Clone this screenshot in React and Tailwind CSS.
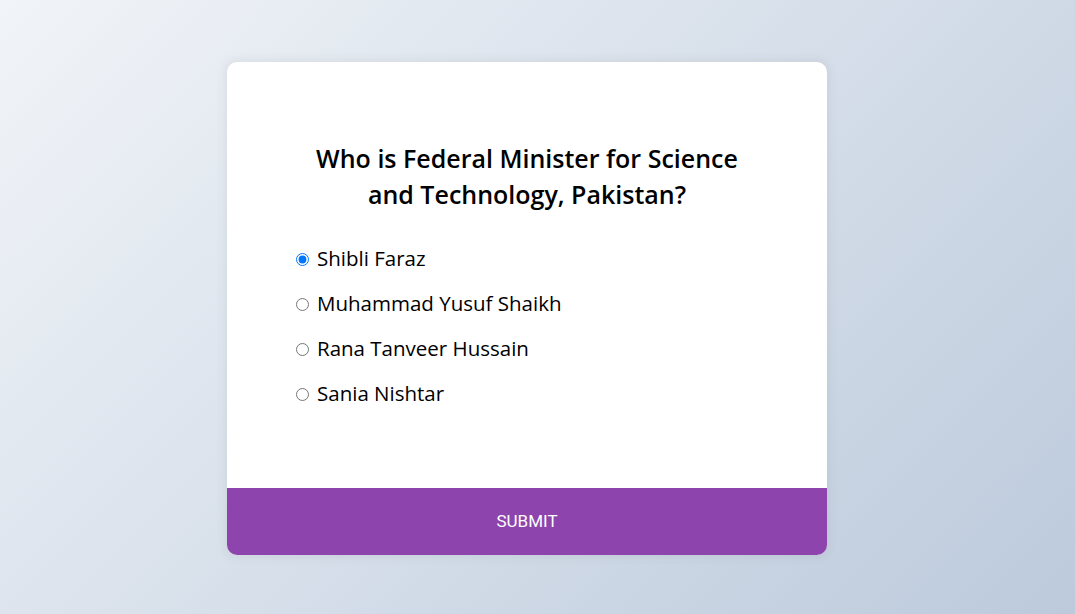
import React, { useState } from "react";

const answers = [
  { id: "a", text: "Shibli Faraz" },
  { id: "b", text: "Muhammad Yusuf Shaikh" },
  { id: "c", text: "Rana Tanveer Hussain" },
  { id: "d", text: "Sania Nishtar" },
];

const App = () => {
  const [selected, setSelected] = useState("a");

  return (
    <div className="min-h-screen w-full flex items-center justify-center pr-[21px] pt-[3px] bg-[linear-gradient(315deg,#bccadc_0%,#f1f4f8_100%)] font-['Open_Sans',sans-serif]">
      {/* Quiz card */}
      <div className="w-[600px] bg-white rounded-[10px] overflow-hidden shadow-[0_0_10px_2px_rgba(100,100,100,0.1)]">
        <div className="p-16">
          <h2 className="pt-[14px] pb-[16px] text-center text-[25px] leading-[36px] font-semibold text-black">
            Who is Federal Minister for Science
            <br />
            and Technology, Pakistan?
          </h2>

          <ul>
            {answers.map((answer) => (
              <li key={answer.id} className="my-4 flex items-center h-[29px] text-[20.5px] text-black">
                <input
                  type="radio"
                  name="answer"
                  id={answer.id}
                  checked={selected === answer.id}
                  onChange={() => setSelected(answer.id)}
                  className="w-[13px] h-[13px] ml-[5px] mr-[8px] mt-[1px]"
                />
                <label htmlFor={answer.id} className="cursor-pointer">
                  {answer.text}
                </label>
              </li>
            ))}
          </ul>
        </div>

        <button className="w-full bg-[#8e44ad] text-white text-[17px] leading-[25px] py-[21px] font-['Roboto',sans-serif] uppercase">
          Submit
        </button>
      </div>
    </div>
  );
};

export default App;
